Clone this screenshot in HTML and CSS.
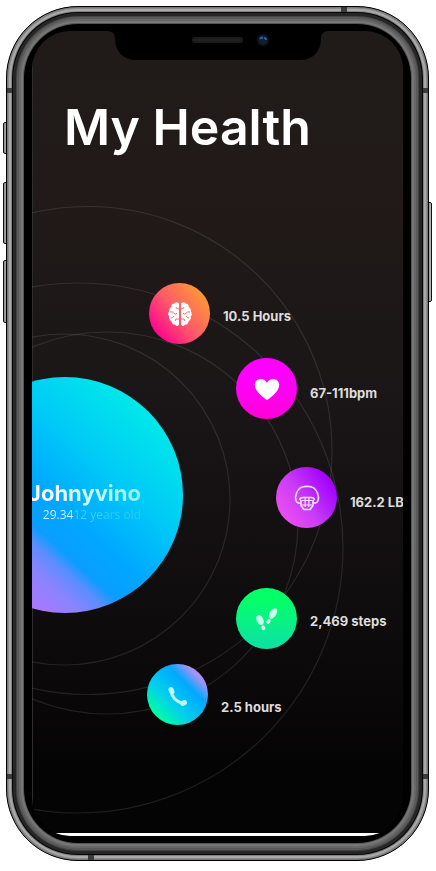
FILE: index.html
```html
<!DOCTYPE html>
<html lang="en">
<head>
<meta charset="utf-8">
<meta name="viewport" content="width=device-width, initial-scale=1">
<title>My Health</title>
<link rel="stylesheet" href="styles.css">
</head>
<body>
<div class="phone">
  <span class="key key-mute"></span>
  <span class="key key-up"></span>
  <span class="key key-down"></span>
  <span class="key key-power"></span>
  <div class="bezel">
    <span class="antenna antenna-top"></span>
    <span class="antenna antenna-bottom"></span>
    <span class="antenna antenna-side upper"></span>
    <span class="antenna antenna-side lower"></span>
    <div class="screen">
      <svg class="notch" width="222" height="30" viewBox="0 0 222 30" aria-hidden="true">
        <path d="M0 0H222Q214 0 214 7C214 21 206 29 192 29H30C16 29 8 21 8 7Q8 0 0 0Z" fill="#000"/>
        <rect x="85" y="6" width="51" height="6" rx="3" fill="#1b1b1b"/>
        <path d="M88 9H134" stroke="#272727" stroke-width="2" stroke-dasharray="1 1"/>
        <circle cx="156" cy="9" r="6" fill="#111418"/>
        <circle cx="156" cy="9" r="4" fill="#10202f"/>
        <path d="M153 8q1-2 3-1M157 7q2 0 2 2" stroke="#245fae" stroke-width="2" fill="none"/>
      </svg>
      <main class="app">
        <h1>My Health</h1>
        <section class="stage">
          <svg class="rings" width="371" height="669" viewBox="0 0 371 669" aria-hidden="true">
            <circle cx="32.500" cy="335.500" r="165.500"/>
            <circle cx="75" cy="359" r="191"/>
            <circle cx="56" cy="286.500" r="244"/>
            <circle cx="46" cy="384" r="265"/>
          </svg>
          <div class="profile">
            <p class="name">Johnyvino</p>
            <p class="age">29.3412 years old</p>
          </div>
          <ul class="vitals">
            <li class="vital sleep">
              <span class="disc">
                <svg width="26" height="26" viewBox="0 0 26 26" aria-hidden="true">
                  <path fill="#fff" d="M12 2.500Q9-.2 7.500 2.500Q4 2.500 4.200 6Q1.500 7.500 2.200 10.500Q.2 13 2.200 15.500Q1.500 19 4.500 20.200Q5 24 8 23.500Q10 26.500 12 23.500ZM14 2.500Q17-.2 18.500 2.500Q22 2.500 21.800 6Q24.500 7.500 23.800 10.500Q25.800 13 23.800 15.500Q24.500 19 21.500 20.200Q21 24 18 23.500Q16 26.500 14 23.500Z"/>
                  <path fill="none" stroke="#ff6a67" d="M12 8Q9 8 9 6M3 11Q6 10 7 12.500Q9 14 10 12M12 18Q8 17 8 20M4 17Q6 17 7 15M14 8Q17 8 17 6M23 11Q20 10 19 12.500Q17 14 16 12M14 18Q18 17 18 20M22 17Q20 17 19 15"/>
                </svg>
              </span>
              <span class="label">10.5 Hours</span>
            </li>
            <li class="vital heart">
              <span class="disc">
                <svg width="26" height="26" viewBox="0 0 26 26" aria-hidden="true">
                  <path fill="#fff" d="M13 24C10.500 22.500 .8 15.500 .8 9C.8 5 3.800 3 6.800 3C9.600 3 12 4.500 13 7C14 4.500 16.400 3 19.200 3C22.200 3 25.200 5 25.200 9C25.200 15.500 15.500 22.500 13 24Z"/>
                </svg>
              </span>
              <span class="label">67-111bpm</span>
            </li>
            <li class="vital weight">
              <span class="disc">
                <svg width="26" height="26" viewBox="0 0 26 26" aria-hidden="true">
                  <path fill="none" stroke="#fbe4ff" stroke-width="1.600" stroke-linejoin="round" d="M7 18H4.500Q1.500 17 1.500 12.500Q3 3 9 1.800Q13 1 17 1.800Q23 3 24.500 12.500Q24.500 17 21.500 18H19M5.500 15Q6 12.500 9 12.500H17Q20 12.500 20.500 15M7 15V20.500L10 24.500H16L19 20.500V15"/>
                  <path fill="none" stroke="#fbe4ff" stroke-width="1.200" d="M8 15.500H18M8 20H18M11.200 13V22M14.800 13V22"/>
                </svg>
              </span>
              <span class="label">162.2 LB</span>
            </li>
            <li class="vital steps">
              <span class="disc">
                <svg width="26" height="26" viewBox="0 0 26 26" aria-hidden="true">
                  <g fill="#c6ffef">
                    <ellipse cx="6" cy="14" rx="3.300" ry="5.300" transform="rotate(-25 6 14)"/>
                    <ellipse cx="9.300" cy="21.800" rx="2" ry="2.500" transform="rotate(-25 9.300 21.800)"/>
                    <ellipse cx="19" cy="7.500" rx="3.300" ry="5.800" transform="rotate(32 19 7.500)"/>
                    <ellipse cx="14.500" cy="15.500" rx="2" ry="2.600" transform="rotate(32 14.500 15.500)"/>
                  </g>
                </svg>
              </span>
              <span class="label">2,469 steps</span>
            </li>
            <li class="vital calls">
              <span class="disc">
                <svg width="26" height="26" viewBox="0 0 26 26" aria-hidden="true">
                  <path fill="none" stroke="#baf7ff" stroke-width="3" stroke-linecap="round" d="M6 9Q7.500 18.500 18 21.500"/>
                  <path fill="none" stroke="#baf7ff" stroke-width="5" stroke-linecap="round" d="M6 7.500L7 10M17.500 21.500L19.500 20.500"/>
                </svg>
              </span>
              <span class="label">2.5 hours</span>
            </li>
          </ul>
        </section>
      </main>
    </div>
  </div>
</div>
</body>
</html>
```
FILE: styles.css
```css
* { box-sizing: border-box; }

body {
  margin: 0;
  min-height: 100vh;
  display: flex;
  padding: 6px 7px 10px 6px;
  background: #fff;
  font-family: Inter, "Liberation Sans", sans-serif;
}

h1, p, ul { margin: 0; padding: 0; }

.phone {
  position: relative;
  display: flex;
  flex: 1;
  min-width: 0;
}

/* hardware */
.key {
  position: absolute;
  left: -3px;
  width: 5px;
  border: 1px solid #111;
  border-radius: 2px 0 0 2px;
  background: linear-gradient(90deg, #888, #bbb);
}
.key-mute { top: 116px; height: 32px; }
.key-up { top: 176px; height: 62px; }
.key-down { top: 254px; height: 63px; }
.key-power {
  left: auto;
  right: -3px;
  top: 196px;
  height: 100px;
  border-radius: 0 2px 2px 0;
}

.bezel {
  position: relative;
  display: flex;
  flex: 1;
  min-width: 0;
  padding: 24px 25px;
  border: 1px solid #000;
  border-radius: 72px;
  background: #000;
  box-shadow:
    inset 0 0 0 1px #777,
    inset 0 0 0 2px #8c8a8b,
    inset 0 0 0 4px #aaa8a9,
    inset 0 0 0 5px #858485,
    inset 0 0 0 6px #050505,
    inset 0 0 0 9px #262626,
    inset 0 0 0 10px #454545,
    inset 0 0 0 12px #595959,
    inset 0 0 0 14px #686868,
    inset 0 0 0 16px #777,
    inset 0 0 0 17px #555;
}

.antenna { position: absolute; background: #3c3c3c; }
.antenna-top { top: 0; right: 81px; width: 6px; height: 5px; }
.antenna-bottom { bottom: 0; left: 81px; width: 6px; height: 5px; }
.antenna-side {
  left: 0;
  right: 0;
  height: 5px;
  background: linear-gradient(90deg, #3c3c3c 5px, transparent 5px calc(100% - 5px), #3c3c3c calc(100% - 5px));
}
.upper { top: 81px; }
.lower { bottom: 81px; }

.screen {
  position: relative;
  display: flex;
  flex: 1;
  min-width: 0;
  padding-bottom: 3px;
  border-radius: 38px;
  overflow: hidden;
  background: linear-gradient(#000 50%, #fff 50%) bottom / 100% 6px no-repeat #000;
}

.notch {
  position: absolute;
  top: 0;
  left: 50%;
  transform: translateX(-50%);
  z-index: 1;
}

/* app */
.app {
  display: flex;
  flex-direction: column;
  flex: 1;
  min-width: 0;
  border-left: 1px solid #302e2e;
  background: linear-gradient(#201b19, #211a18 20%, #1a1617 46%, #100d0e 70%, #050405 92%);
  color: #fff;
}

h1 {
  padding: 66px 31px 7px;
  font-size: 50px;
  line-height: 60px;
  font-weight: 600;
  white-space: nowrap;
}

.stage {
  position: relative;
  flex: 1;
  min-height: 600px;
  margin-left: -1px;
  overflow: hidden;
}

.rings {
  position: absolute;
  top: 0;
  left: 0;
  fill: none;
  stroke: #ffffff1a;
  stroke-width: 1.2px;
}

.profile {
  position: absolute;
  left: -85px;
  top: 213px;
  width: 236px;
  height: 236px;
  padding: 103px 42px 0 0;
  border-radius: 50%;
  background:
    linear-gradient(42deg, #c070ff 12%, #8b83ff 27%, #5a8eff 33%, #0a9dff 37%, #00a8ff 47%, #00caf7 64%, #00e6ea 84%);
  text-align: right;
  white-space: nowrap;
}
.name {
  font-size: 22px;
  line-height: 26px;
  font-weight: 700;
  background: linear-gradient(90deg, #fff 50%, #8cf4f6);
  background-clip: text;
  color: transparent;
}
.age {
  font-family: "Open Sans", sans-serif;
  font-size: 12px;
  line-height: 18px;
  background: linear-gradient(90deg, #d9f6ff 64%, #45d6fa 66%, #22c9f3);
  background-clip: text;
  color: transparent;
}

.vitals { list-style: none; }
.vital {
  position: absolute;
  display: flex;
  align-items: center;
  gap: 13px;
}
.disc {
  display: flex;
  align-items: center;
  justify-content: center;
  width: 61px;
  height: 61px;
  border-radius: 50%;
}
.label {
  padding-top: 8px;
  font-size: 13px;
  line-height: 16px;
  font-weight: 700;
  color: #dedcdc;
  white-space: nowrap;
}

.sleep { left: 117px; top: 119px; }
.heart { left: 204px; top: 194px; }
.weight { left: 244px; top: 303px; }
.steps { left: 204px; top: 424px; }
.calls { left: 115px; top: 500px; }
.sleep .label, .steps .label { padding-top: 4px; }
.calls .label { padding-top: 24px; }

.sleep .disc { background: linear-gradient(50deg, #ff0090 12%, #ff5a68 48%, #ff9b35 88%); }
.heart .disc { background: linear-gradient(#ff00ff 30%, #ff00d8); }
.weight .disc { background: linear-gradient(55deg, #f050f0 10%, #c93cf8 45%, #a000ff 85%); }
.steps .disc { background: linear-gradient(#05ff68 20%, #0ce3a0 90%); }
.calls .disc { background: linear-gradient(45deg, #00ffa0 14%, #00d0ec 38%, #00a8ff 66%, #a892f4 82%, #d585e8); }
```
